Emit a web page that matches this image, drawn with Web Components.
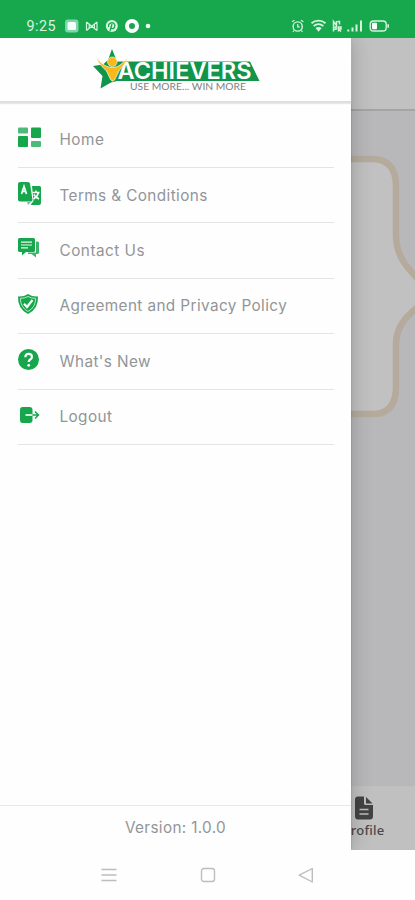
<!DOCTYPE html>
<html lang="en"><head><meta charset="utf-8"><title>Achievers</title>
<style>
html,body{margin:0;height:100%;background:#fefefe;overflow:hidden}
body{font-family:Inter,"Liberation Sans",sans-serif;color:#929497}
</style></head><body>
<app-screen>
<status-bar slot="status"></status-bar>
<page-behind slot="page"></page-behind>
<nav-drawer slot="drawer">
<brand-logo slot="brand"></brand-logo>
<menu-row icon="home" style="--ls:.5px">Home</menu-row>
<menu-row icon="terms">Terms &amp; Conditions</menu-row>
<menu-row icon="contact" style="--ls:.5px">Contact Us</menu-row>
<menu-row icon="shield">Agreement and Privacy Policy</menu-row>
<menu-row icon="help">What's New</menu-row>
<menu-row icon="logout">Logout</menu-row>
<span slot="version">Version: 1.0.0</span>
</nav-drawer>
<system-nav slot="nav"></system-nav>
</app-screen>
<script>
const define=(name,html,setup)=>customElements.define(name,class extends HTMLElement{
 connectedCallback(){ if(this.shadowRoot)return;
  const t=document.createElement('template');t.innerHTML=html;
  this.attachShadow({mode:'open'}).append(t.content.cloneNode(true));
  if(setup)setup(this);}
});

define('app-screen',`<style>
:host{display:grid;grid-template-rows:38px 812px 50px;width:415px;height:900px;overflow:hidden;background:#fefefe}
.stage{position:relative;overflow:hidden}
.over{position:absolute;left:0;top:0;bottom:0;width:351px}
</style><slot name="status"></slot><div class="stage"><slot name="page"></slot><div class="over"><slot name="drawer"></slot></div></div><slot name="nav"></slot>`);

define('status-bar',`<style>
:host{display:block;background:#17a84e;height:38px}
svg{display:block}
text{font-family:Roboto,"Liberation Sans",sans-serif;fill:#d9f5df}
</style><svg width="415" height="38" fill="none" stroke="#d4f4dc" stroke-width="1.4">
<text x="26.5" y="31" font-size="14.3" textLength="29" stroke="none">9:25</text>
<rect x="65" y="19.500" width="13.500" height="13" rx="3" fill="#7fd6ae" stroke="none"/><rect x="67.500" y="22" width="8.500" height="8" rx="1.500" fill="#f4fffa" stroke="none"/>
<path d="M86.500 22v8.500M97 22v8.500M86.500 22l5.200 4.300L97 22M86.500 30.500l5.200-4.200 5.300 4.200M89.200 24.500v4M94.400 24.500v4" stroke-width="1.200"/>
<circle cx="111.800" cy="26" r="6" fill="#d9f5df" stroke="none"/><path d="M110 31l2-7M108.700 27c-1.600-4.600 6.300-6 6.200-1.500-.1 2.800-2.500 4-3.700 2.300" stroke="#17a84e" stroke-width="1.300"/>
<circle cx="132" cy="26" r="5" stroke="#fff" stroke-width="4"/>
<circle cx="148" cy="26" r="2.300" fill="#eafff0" stroke="none"/>
<circle cx="297.700" cy="26.500" r="4.600"/><path d="M292 21.800l2.500-1.600M303.400 21.800l-2.500-1.600M297.700 24v2.800h2M294 30.500l-1 1.500M301.400 30.500l1 1.500" stroke-width="1.200"/>
<path d="M311.500 23.200c4-3.500 10-3.500 14 0M313.700 26c3-2.400 6.700-2.400 9.700 0" stroke-width="1.800"/><path d="M315.500 28c2-1.500 4.200-1.500 6.200 0l-3.100 3.800z" fill="#d4f4dc" stroke="none"/>
<path d="M333.500 26v-4.500l3 4V21M337.500 21.500h2v3M333.500 31.500V27h2.500v2.200h-2M338.500 31.500V27h2.500v2h-2.500l2.500 2.500" stroke-width="1.500"/>
<path d="M348.300 29.500v2M352.500 27.500v4M356.500 24.500v7M361 20.500v11" stroke-width="2"/>
<rect x="370.200" y="21" width="16" height="10" rx="3.300"/><rect x="372" y="22.700" width="5" height="6.600" rx="1" fill="#fff" stroke="none"/><path d="M388.200 24.300v3.400" stroke-width="1.600"/>
</svg>`);

define('page-behind',`<style>
:host{display:grid;grid-template-rows:73px 1fr 64px;height:812px;background:#b8b8ba}
header{background:#c1c1c1;border-bottom:2px solid #a4a4a5;box-sizing:border-box}
footer{background:#c0c0c0;display:flex;flex-direction:column;align-items:flex-end;box-sizing:border-box;padding:10px 30.500px 0 0}
main svg{display:block}
footer svg{display:block;margin-right:12px}
span{font:500 13px/15px "Noto Sans",sans-serif;color:#49494a;margin-top:3px;letter-spacing:.22px}
</style><header></header><main><svg width="415" height="330" viewBox="0 111 415 330"><path d="M20 159H375Q395 161 396 184V235C396 256 406 267 422 283V304C410 313 396 324 396 344V389Q395 412 376 414H20Z" fill="#c1c1c1" stroke="#b5aa9c" stroke-width="6.500"/></svg></main>
<footer><svg width="18" height="24" viewBox="0 0 18 24"><path d="M3 .5H9V7.500Q9 9 10.500 9H18V20Q18 23.500 15 23.500H3Q0 23.500 0 20V3.500Q0 .5 3 .5Z" fill="#434344"/><path d="M11 1l6.500 6.500H11z" fill="#434344"/><path d="M4.500 13.500h9M4.500 18h9" stroke="#c0c0c0" stroke-width="1.700"/></svg><span>Profile</span></footer>`);

define('nav-drawer',`<style>
:host{display:flex;flex-direction:column;height:812px;background:#fefefe;box-shadow:0 0 2px rgba(0,0,0,.2),0 0 20px rgba(0,0,0,.22)}
header{height:63px;flex:none;border-bottom:2.500px solid #dedfdf;background:#fefefe;box-shadow:0 1px 1px #e8e8e8}
nav{flex:1;padding:9.700px 17px 0 18px}
footer{height:45px;flex:none;border-top:1px solid #e8e8e8;box-sizing:border-box;text-align:center;font-size:15.300px;line-height:44px;letter-spacing:.34px;color:#929598}
</style><header><slot name="brand"></slot></header><nav><slot></slot></nav><footer><slot name="version"></slot></footer>`);

define('brand-logo',`<style>:host{display:block}svg{display:block}</style>
<svg width="351" height="63" viewBox="0 38 351 63">
<path d="M112 49L117 61.500H250L259.500 81H117L111 82.500 100.500 88.500 102.500 76 93 66 103 64.500 108 60Z" fill="#11954a"/>
<text x="117.500" y="78.800" font-size="22.500" font-weight="600" textLength="134" lengthAdjust="spacingAndGlyphs" fill="#fff" font-family="Inter,sans-serif">ACHIEVERS</text>
<path d="M96.500 57.500C101 64 107 67.500 112.500 67.500C118 67.500 123 63.500 127.500 57.500C125.500 66 120 68 118.500 72L114.500 80Q112.500 82.500 110.500 79.500L107 72C105 68 99 66 96.500 57.500Z" fill="#f9b91c" stroke="#fff" stroke-width=".7"/>
<circle cx="112.300" cy="61.800" r="4.800" fill="#f9b91c" stroke="#fff" stroke-width=".6"/>
<text x="130" y="90" font-size="9.700" textLength="116" lengthAdjust="spacingAndGlyphs" fill="#808080" font-family="Lato,sans-serif">USE MORE... WIN MORE</text>
</svg>`);

const G='#16a64c';
const icons={
home:`<rect x="0" y=".5" width="10" height="6" rx="1" fill="#4fb979"/><rect x="13" y=".5" width="10" height="10.500" rx="1"/><rect x="0" y="9" width="10" height="11" rx="1"/><rect x="13" y="14" width="10" height="6" rx="1" fill="#4fb979"/>`,
terms:`<path d="M2 0h8q1.500 0 2 1.500L14.500 18q0 1.500-2 1.500H2q-2 0-2-2V2Q0 0 2 0Z"/><path d="M14 4h7.500q1.500 0 1.500 1.500V21q0 2-2 2h-8.500l3-4z"/><path d="M9 20h4l-3 3z" fill="#8aaec5"/><path d="M3.500 12l2.500-7.500L8.500 12M4.500 9.500h3" stroke="#fff" stroke-width="1.700" fill="none"/><path d="M14.500 10.500h7M18 8.500v2M20.500 10.500q-1 4-5 6.500M15.700 12.500q2 3 5.300 4.500" stroke="#fff" stroke-width="1.500" fill="none"/>`,
contact:`<path d="M18 3.500h1.500q1.500 0 1.500 1.500v9.500q0 1.500-1.500 1.500H18v3.500L13.500 16H10v-1.500h8z" fill="#3fb26b"/><path d="M1.500 0H15.500Q17 0 17 1.500V12.500Q17 14 15.500 14H8L4 17.500V14H1.500Q0 14 0 12.500V1.500Q0 0 1.500 0Z"/><path d="M3 4.200h11M3 7h11M3 9.800h7" stroke="#e9f9ef" stroke-width="1.200"/>`,
shield:`<path d="M10 0Q14.500 3 20 2.500Q20.500 15 10 20Q-.5 15 0 2.500Q5.500 3 10 0Z"/><path d="M10 2.500Q13.500 4.500 17.700 4.300Q17.500 13.500 10 17.500Q2.500 13.500 2.300 4.300Q6.500 4.500 10 2.500Z" fill="none" stroke="#b9e7c9" stroke-width="1"/><path d="M6 9.700l3 3.300 5.500-7" stroke="#fff" stroke-width="2.200" fill="none"/>`,
help:`<circle cx="10.500" cy="10.500" r="10.500"/><path d="M7.300 8.200Q7.300 4.800 10.600 4.800T13.900 7.900Q13.900 9.500 12.200 10.500Q10.700 11.400 10.700 13" stroke="#fff" stroke-width="2.200" fill="none"/><circle cx="10.700" cy="16.300" r="1.400" fill="#fff"/>`,
logout:`<path d="M4.500 0H11.500Q14.500 0 14.500 3V13Q14.500 16 11.500 16H4.500Q2 16 2 13V3Q2 0 4.500 0Z"/><path d="M7.500 8h7" stroke="#fff" stroke-width="1.600"/><path d="M14.500 8h5.500M17 4.500L20.500 8 17 11.500" stroke="${G}" stroke-width="1.500" fill="none"/>`};
const tops={home:14,terms:13.500,contact:15,shield:15,help:15,logout:17};
define('menu-row',`<style>
:host{display:flex;height:55.400px;box-sizing:border-box;border-bottom:1.500px solid #e4e4e4;color:#929598}
.i{width:41.500px;flex:none}svg{display:block;overflow:visible}
.t{font-size:15.300px;line-height:20px;padding-top:17.500px;letter-spacing:var(--ls,.4px);white-space:nowrap}
</style><div class="i"><svg width="24" height="24" fill="${G}"></svg></div><div class="t"><slot></slot></div>`,el=>{
 const k=el.getAttribute('icon'),s=el.shadowRoot.querySelector('svg');
 s.innerHTML=icons[k];s.style.marginTop=tops[k]+'px';
});

define('system-nav',`<style>:host{display:flex;justify-content:space-between;align-items:center;height:50px;box-sizing:border-box;padding:0 101px 0 101px;background:#fefefe}svg{display:block}</style>
<svg width="16" height="16" fill="none" stroke="#bdbdbd" stroke-width="1.400"><path d="M.5 2.500h15M.5 8h15M.5 13.500h15"/></svg>
<svg width="16" height="16" fill="none" stroke="#bdbdbd" stroke-width="1.400"><rect x="1.500" y="1.500" width="13" height="13" rx="2.500"/></svg>
<svg width="16" height="16" fill="none" stroke="#bdbdbd" stroke-width="1.400"><path d="M14.300 1.500V15L1.200 8.200Z" stroke-linejoin="round"/></svg>`);
</script></body></html>
